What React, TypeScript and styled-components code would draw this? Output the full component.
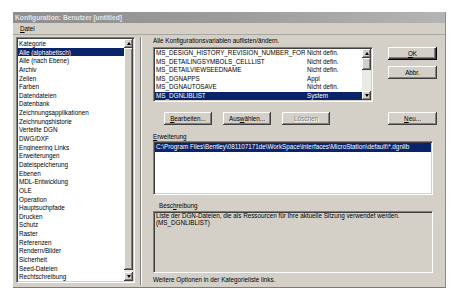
import React from 'react';
import styled, { createGlobalStyle, css } from 'styled-components';

const categories = [
    'Alle (alphabetisch)',
    'Alle (nach Ebene)',
    'Archiv',
    'Zellen',
    'Farben',
    'Datendateien',
    'Datenbank',
    'Zeichnungsapplikationen',
    'Zeichnungshistorie',
    'Verteilte DGN',
    'DWG/DXF',
    'Engineering Links',
    'Erweiterungen',
    'Dateispeicherung',
    'Ebenen',
    'MDL-Entwicklung',
    'OLE',
    'Operation',
    'Hauptsuchpfade',
    'Drucken',
    'Schutz',
    'Raster',
    'Referenzen',
    'Rendern/Bilder',
    'Sicherheit',
    'Seed-Dateien',
    'Rechtschreibung',
];

const variables = [
    ['MS_DESIGN_HISTORY_REVISION_NUMBER_FORMAT', 'Nicht defin.'],
    ['MS_DETAILINGSYMBOLS_CELLLIST', 'Nicht defin.'],
    ['MS_DETAILVIEWSEEDNAME', 'Nicht defin.'],
    ['MS_DGNAPPS', 'Appl'],
    ['MS_DGNAUTOSAVE', 'Nicht defin.'],
    ['MS_DGNLIBLIST', 'System'],
];

const dgnlibPath = String.raw`C:\Program Files\Bentley\081107171de\WorkSpace\interfaces\MicroStation\default\*.dgnlib`;

// #region Styles

const GlobalStyle = createGlobalStyle`
    html, body {
        margin: 0;
        padding: 0;
        background: #ffffff;
    }
    body {
        font-family: "Liberation Sans", Arial, sans-serif;
        font-size: 6.3px;
        color: #000;
    }
`;

const raised = css`
    background: #d4d0c8;
    box-shadow: inset -1px -1px #404040, inset 1px 1px #ffffff, inset -2px -2px #808080;
`;

const sunken = css`
    border: 1px solid;
    border-color: #808080 #ffffff #ffffff #808080;
    box-shadow: inset 1px 1px #404040, inset -1px -1px #d4d0c8;
    padding: 1px;
    box-sizing: border-box;
`;

const Page = styled.div`
    width: 462px;
    height: 306px;
    padding: 12px 0 0 13px;
    box-sizing: border-box;
`;

const Window = styled.div`
    width: 433px;
    height: 276px;
    background: #d4d0c8;
    border-right: 1px solid #8a8a8a;
    border-bottom: 1px solid #7a7a7a;
    box-sizing: border-box;
    display: flex;
    flex-direction: column;
    overflow: hidden;
`;

const TitleBar = styled.div`
    height: 11px;
    line-height: 11px;
    padding-left: 2px;
    background: linear-gradient(90deg, #8e8e8e 0%, #9c9c9c 50%, #b4b4b4 100%);
    color: #e4e4e4;
    font-weight: bold;
    font-size: 6.7px;
    white-space: nowrap;
`;

const MenuBar = styled.div`
    height: 11px;
    line-height: 11px;
    padding-left: 7px;
    border-bottom: 1px solid #a8a6a0;
`;

const Body = styled.div`
    flex: 1;
    display: flex;
    padding-top: 2px;
`;

const LeftPane = styled.div`
    padding-left: 3px;
    display: flex;
`;

const ListBox = styled.div<{ $w: number; $h: number }>`
    ${sunken};
    width: ${p => p.$w}px;
    height: ${p => p.$h}px;
    background: #ffffff;
    display: flex;
    overflow: hidden;
`;

const Rows = styled.div`
    flex: 1;
    min-width: 0;
    display: flex;
    flex-direction: column;
`;

const Row = styled.div<{ $selected?: boolean; $h: number }>`
    height: ${p => p.$h}px;
    line-height: ${p => p.$h}px;
    padding-left: 1px;
    white-space: nowrap;
    display: flex;
    overflow: hidden;
    background: ${p => (p.$selected ? '#0a246a' : 'transparent')};
    color: ${p => (p.$selected ? '#ffffff' : '#000000')};
`;

const Cell = styled.span<{ $w?: number }>`
    overflow: hidden;
    flex: ${p => (p.$w ? `0 0 ${p.$w}px` : '1')};
    margin-right: ${p => (p.$w ? 2 : 0)}px;
`;

const ScrollBar = styled.div`
    width: 9px;
    display: flex;
    flex-direction: column;
`;

const ArrowButton = styled.div<{ $down?: boolean }>`
    ${raised};
    height: 9px;
    display: flex;
    align-items: center;
    justify-content: center;
    &::after {
        content: '';
        border-left: 2.5px solid transparent;
        border-right: 2.5px solid transparent;
        ${p => (p.$down ? 'border-top: 3px solid #000;' : 'border-bottom: 3px solid #000;')}
    }
`;

const Track = styled.div`
    flex: 1;
    background: #ebe9e4;
    display: flex;
    flex-direction: column;
`;

const Thumb = styled.div<{ $h: number }>`
    ${raised};
    height: ${p => p.$h}px;
`;

const Splitter = styled.div`
    margin-left: 5px;
    margin-bottom: 2px;
    border-left: 1px solid #808080;
    border-right: 1px solid #ffffff;
`;

const RightPane = styled.div`
    margin-left: 11px;
    width: 284px;
    display: flex;
    flex-direction: column;
`;

const Caption = styled.div<{ $top: number; $indent?: number }>`
    height: 8px;
    line-height: 8px;
    margin-top: ${p => p.$top}px;
    padding-left: ${p => p.$indent || 0}px;
    white-space: nowrap;
`;

const TopRow = styled.div`
    margin-top: 2px;
    display: flex;
`;

const ButtonColumn = styled.div`
    margin-left: auto;
    display: flex;
    flex-direction: column;
    gap: 6px;
`;

const Button = styled.div<{ $w?: number; $default?: boolean; $disabled?: boolean; $push?: boolean }>`
    ${raised};
    width: ${p => p.$w || 48}px;
    height: 13px;
    line-height: 13px;
    text-align: center;
    white-space: nowrap;
    ${p => p.$push && 'margin-left: auto;'}
    ${p =>
        p.$default &&
        css`
            box-shadow: inset -1px -1px #000000, inset 1px 1px #ffffff, inset -2px -2px #404040, inset -3px -3px #808080;
        `}
    ${p =>
        p.$disabled &&
        css`
            color: #808080;
            text-shadow: 1px 1px #ffffff;
        `}
`;

const ButtonRow = styled.div`
    margin-top: 10px;
    padding-left: 11px;
    display: flex;
    gap: 11px;
`;

const GroupBox = styled.div`
    margin-top: 1px;
    width: 280px;
    height: 62px;
    border: 1px solid;
    border-color: #808080 #ffffff #ffffff #808080;
    box-shadow: inset 1px 1px #404040;
    box-sizing: border-box;
    padding: 1px 0 0 2px;
    line-height: 6.6px;
`;

const U = styled.span`
    text-decoration: underline;
`;

// #endregion

function Scroller({ thumb }: { thumb: number }) {
    return (
        <ScrollBar>
            <ArrowButton />
            <Track>
                <Thumb $h={thumb} />
            </Track>
            <ArrowButton $down />
        </ScrollBar>
    );
}

export default function App() {
    return (
        <Page>
            <GlobalStyle />
            <Window>
                <TitleBar>Konfiguration: Benutzer [untitled]</TitleBar>
                <MenuBar>
                    <U>D</U>atei
                </MenuBar>
                <Body>
                    <LeftPane>
                        <ListBox $w={119} $h={246}>
                            <Rows>
                                <Row $h={9.05}>Kategorie</Row>
                                {categories.map((item, index) => (
                                    <Row key={index} $h={9.05} $selected={index === 0}>
                                        {item}
                                    </Row>
                                ))}
                            </Rows>
                            <Scroller thumb={222} />
                        </ListBox>
                    </LeftPane>
                    <Splitter />
                    <RightPane>
                        <Caption $top={0}>Alle Konfigurationsvariablen auflisten/ändern.</Caption>
                        <TopRow>
                            <ListBox $w={220} $h={55}>
                                <Rows>
                                    {variables.map((item, index) => (
                                        <Row key={index} $h={8.55} $selected={index === variables.length - 1}>
                                            <Cell $w={149}>{item[0]}</Cell>
                                            <Cell>{item[1]}</Cell>
                                        </Row>
                                    ))}
                                </Rows>
                                <Scroller thumb={12} />
                            </ListBox>
                            <ButtonColumn>
                                <Button $w={49} $default>
                                    <U>O</U>K
                                </Button>
                                <Button $w={49}>Abbr.</Button>
                            </ButtonColumn>
                        </TopRow>
                        <ButtonRow>
                            <Button>
                                <U>B</U>earbeiten...
                            </Button>
                            <Button>
                                Aus<U>w</U>ählen...
                            </Button>
                            <Button $disabled>Löschen</Button>
                            <Button $w={49} $push>
                                <U>N</U>eu...
                            </Button>
                        </ButtonRow>
                        <Caption $top={8}>
                            <U>E</U>rweiterung
                        </Caption>
                        <ListBox $w={280} $h={54}>
                            <Rows>
                                <Row $h={8.5} $selected>
                                    {dgnlibPath}
                                </Row>
                            </Rows>
                        </ListBox>
                        <Caption $top={7} $indent={6}>
                            Besc<U>h</U>reibung
                        </Caption>
                        <GroupBox>
                            Liste der DGN-Dateien, die als Ressourcen für Ihre aktuelle Sitzung verwendet werden.
                            <br />
                            (MS_DGNLIBLIST)
                        </GroupBox>
                        <Caption $top={3}>Weitere Optionen in der Kategorieliste links.</Caption>
                    </RightPane>
                </Body>
            </Window>
        </Page>
    );
}
